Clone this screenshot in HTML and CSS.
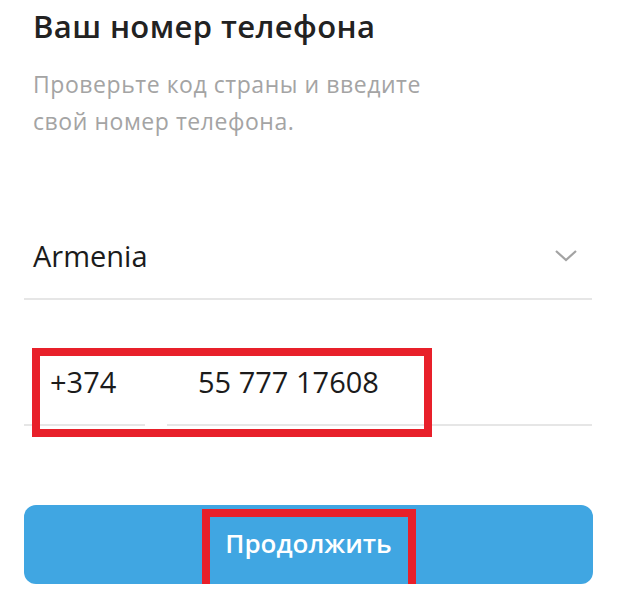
FILE: index.html
```html
<!DOCTYPE html>
<html lang="ru">
<head>
<meta charset="utf-8">
<link rel="stylesheet" href="styles.css">
</head>
<body>
<div class="page">
  <h1 class="title">Ваш номер телефона</h1>
  <p class="subtitle">Проверьте код страны и введите<br>свой номер телефона.</p>
  <div class="country">
    <span class="country-name">Armenia</span>
    <svg class="chevron" width="24" height="14" viewBox="0 0 24 14"><path d="M2 2 L12 11 L22 2" fill="none" stroke="#a3a3a3" stroke-width="2.2"/></svg>
  </div>
  <div class="phone">
    <div class="field code">+374</div>
    <div class="field number">55 777 17608</div>
  </div>
  <button class="submit">Продолжить</button>
  <div class="mark mark-phone"></div>
  <div class="mark mark-button"></div>
</div>
</body>
</html>
```
FILE: styles.css
```css
html, body {
  margin: 0;
  padding: 0;
  background: #fff;
}
.page {
  position: relative;
  width: 568px;
  padding: 0 32px 0 24px;
  font-family: "Open Sans", "Noto Sans", sans-serif;
  color: #1b1b1b;
}
.title {
  margin: 0;
  padding: 6px 0 0 9px;
  font-size: 31px;
  line-height: 40px;
  font-weight: 600;
  letter-spacing: 0.4px;
  color: #222;
}
.subtitle {
  margin: 20px 0 0 9px;
  font-size: 23px;
  line-height: 37px;
  letter-spacing: 0.55px;
  color: #a4a4a4;
}
.country {
  margin-top: 96px;
  display: flex;
  align-items: center;
  justify-content: space-between;
  padding: 0 14px 22px 9px;
  border-bottom: 2px solid #e6e6e6;
  font-size: 29px;
  line-height: 40px;
}
.chevron {
  display: block;
}
.phone {
  margin-top: 62px;
  display: flex;
  gap: 22px;
}
.field {
  font-size: 29px;
  line-height: 40px;
  padding-bottom: 22px;
  border-bottom: 2px solid #e6e6e6;
}
.code {
  width: 95px;
  padding-left: 26px;
}
.number {
  flex: 1;
  padding-left: 31px;
}
.submit {
  display: block;
  margin-top: 79px;
  width: 569px;
  height: 79px;
  border: 0;
  border-radius: 12px;
  background: #40a6e2;
  color: #fff;
  font-family: "Open Sans", "Noto Sans", sans-serif;
  font-size: 26px;
  font-weight: 600;
  padding: 0 0 4px;
}
.mark {
  position: absolute;
  border: 8px solid #e8202a;
}
.mark-phone {
  left: 32px;
  top: 348px;
  width: 384px;
  height: 73px;
}
.mark-button {
  left: 202px;
  top: 509px;
  width: 198px;
  height: 67px;
}
```
